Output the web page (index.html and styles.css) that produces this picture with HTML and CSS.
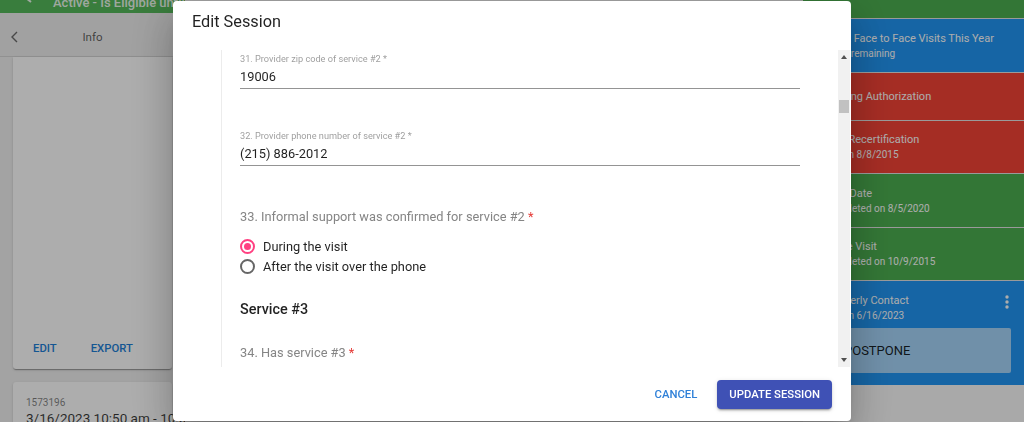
FILE: index.html
```html
<!DOCTYPE html>
<html lang="en">
<head>
<meta charset="utf-8">
<title>Edit Session</title>
<link rel="stylesheet" href="styles.css">
</head>
<body>
<div class="app">
  <aside class="left">
    <div class="status-bar">
      <svg class="status-icon" width="14" height="13" viewBox="0 0 14 13"><path d="M13 -2H3M7 -6L2 -2L7 2" fill="none" stroke="currentColor" stroke-width="2"/></svg>
      <span class="status-text">Active - Is Eligible until 12/31/2023</span>
    </div>
    <div class="info-header">
      <svg class="chevron" width="8" height="12" viewBox="0 0 8 12"><polyline points="7,1 2,6 7,11" fill="none" stroke="currentColor" stroke-width="1.4"/></svg>
      <span class="info-title">Info</span>
      <span></span>
    </div>
    <div class="left-body">
      <div class="card card-main">
        <div class="card-actions">
          <button class="text-btn">EDIT</button>
          <button class="text-btn">EXPORT</button>
        </div>
      </div>
      <div class="card card-session">
        <div class="session-id">1573196</div>
        <div class="session-time">3/16/2023 10:50 am - 10:55 am</div>
      </div>
    </div>
  </aside>
  <main class="middle"></main>
  <aside class="right">
    <div class="tile tile-green tile-top"></div>
    <div class="tile tile-blue h54">
      <div class="tile-title">2 of 2 Face to Face Visits This Year</div>
      <div class="tile-sub">0 of 2 remaining</div>
    </div>
    <div class="tile tile-red h48">
      <div class="tile-title">Pending Authorization</div>
    </div>
    <div class="tile tile-red h53">
      <div class="tile-title">Next Recertification</div>
      <div class="tile-sub">Due on 8/8/2015</div>
    </div>
    <div class="tile tile-green h54">
      <div class="tile-title">Start Date</div>
      <div class="tile-sub">Completed on 8/5/2020</div>
    </div>
    <div class="tile tile-green h53">
      <div class="tile-title">Home Visit</div>
      <div class="tile-sub">Completed on 10/9/2015</div>
    </div>
    <div class="tile tile-blue tile-action">
      <div class="tile-head">
        <div>
          <div class="tile-title">Quarterly Contact</div>
          <div class="tile-sub">Due on 6/16/2023</div>
        </div>
        <svg class="kebab" width="4" height="14" viewBox="0 0 4 14"><circle cx="2" cy="2" r="1.7"/><circle cx="2" cy="7" r="1.7"/><circle cx="2" cy="12" r="1.7"/></svg>
      </div>
      <button class="postpone">POSTPONE</button>
    </div>
  </aside>
</div>

<div class="overlay">
  <div class="dialog" role="dialog">
    <h2 class="dialog-title">Edit Session</h2>
    <div class="dialog-content">
      <div class="form">
        <div class="field">
          <label class="field-label">31. Provider zip code of service #2 *</label>
          <div class="field-value">19006</div>
        </div>
        <div class="field">
          <label class="field-label">32. Provider phone number of service #2 *</label>
          <div class="field-value">(215) 886-2012</div>
        </div>
        <div class="question">33. Informal support was confirmed for service #2 <span class="req">*</span></div>
        <div class="radio-group">
          <div class="radio-row"><span class="radio checked"></span><span>During the visit</span></div>
          <div class="radio-row"><span class="radio"></span><span>After the visit over the phone</span></div>
        </div>
        <h3 class="section-title">Service #3</h3>
        <div class="question">34. Has service #3 <span class="req">*</span></div>
      </div>
      <div class="scrollbar">
        <span class="arrow arrow-up"></span>
        <span class="thumb"></span>
        <span class="arrow arrow-down"></span>
      </div>
    </div>
    <div class="dialog-actions">
      <button class="btn-cancel">CANCEL</button>
      <button class="btn-primary">UPDATE SESSION</button>
    </div>
  </div>
</div>
</body>
</html>
```
FILE: styles.css
```css
* { box-sizing: border-box; }
html, body { margin: 0; height: 100%; }
body {
  font-family: Roboto, "Noto Sans", "Liberation Sans", sans-serif;
  background: #f0f0f0;
  overflow: hidden;
}
button { font-family: inherit; cursor: pointer; }

.app { display: flex; height: 422px; }

/* left column */
.left { width: 185px; flex: none; display: flex; flex-direction: column; background: #f0f0f0; }
.status-bar {
  height: 13px; flex: none; background: #55b85a; overflow: hidden;
  display: flex; align-items: flex-end; padding-left: 24px; gap: 15px;
  color: rgba(255,255,255,.9);
}
.status-icon { flex: none; align-self: flex-start; }
.status-text { font-size: 13px; font-weight: 500; line-height: 20px; white-space: nowrap; }
.info-header {
  height: 44px; flex: none; background: #ededed; border-bottom: 1px solid #d6d6d6;
  display: grid; grid-template-columns: 1fr auto 1fr; align-items: center;
  padding-top: 4px; color: rgba(0,0,0,.62);
}
.chevron { color: rgba(0,0,0,.55); margin-left: 10px; }
.info-title { font-size: 11.5px; }
.left-body { flex: 1; display: flex; flex-direction: column; padding: 0 13px; }
.card {
  background: #fff;
  box-shadow: 0 2px 1px -1px rgba(0,0,0,.2), 0 1px 1px 0 rgba(0,0,0,.14), 0 1px 3px 0 rgba(0,0,0,.12);
  border-radius: 0 0 3px 3px;
}
.card-main { height: 312px; flex: none; display: flex; flex-direction: column; justify-content: flex-end; padding: 0 8px 3px; }
.card-actions { display: flex; gap: 10px; }
.text-btn {
  height: 36px; padding: 0 12px; border: 0; background: none;
  font-size: 11.3px; font-weight: 500; color: #1e7fd8;
}
.card-session { margin-top: 13px; flex: 1; padding: 14px 13px 0; border-radius: 3px; }
.session-id { font-size: 10px; line-height: 13px; color: rgba(0,0,0,.5); }
.session-time { font-size: 13.5px; line-height: 18px; color: rgba(0,0,0,.78); white-space: nowrap; }

.middle { flex: 1; background: #f0f0f0; }

/* right column */
.right { width: 221px; flex: none; display: flex; flex-direction: column; background: #fafafa; }
.tile {
  flex: none; display: flex; flex-direction: column; justify-content: center;
  padding-left: 20px; color: #fff; border-top: 1px solid #e4e4e4;
}
.tile-top { height: 18px; border-top: 0; }
.h48 { height: 48px; }
.h53 { height: 53px; }
.h54 { height: 54px; }
.tile-green { background: #4caf50; }
.tile-blue { background: #2196f3; }
.tile-red { background: #f44336; }
.tile-title { font-size: 11px; line-height: 15px; white-space: nowrap; }
.tile-sub { font-size: 10px; line-height: 15px; white-space: nowrap; }
.tile-action { height: 105px; justify-content: flex-start; padding: 12px 13px 12px 20px; }
.tile-head { display: flex; justify-content: space-between; align-items: flex-start; }
.kebab { fill: #fff; margin: 2px 2px 0 0; }
.postpone {
  margin-top: 5px; height: 45px; border: 0; border-radius: 2px;
  background: rgba(255,255,255,.6); color: rgba(0,0,0,.87);
  font-size: 13px; text-align: left; padding-left: 21px;
}

/* dialog */
.overlay {
  position: fixed; inset: 0; background: rgba(0,0,0,.32);
  display: flex; align-items: center; justify-content: center;
}
.dialog {
  width: 678px; height: 420px; background: #fff; border-radius: 4px;
  display: flex; flex-direction: column;
  box-shadow: 0 11px 15px -7px rgba(0,0,0,.2), 0 24px 38px 3px rgba(0,0,0,.14), 0 9px 46px 8px rgba(0,0,0,.12);
}
.dialog-title {
  margin: 0; padding: 9px 19px 16px; font-size: 16.3px; line-height: 24px;
  font-weight: 400; color: rgba(0,0,0,.87);
}
.dialog-content {
  position: relative; height: 317px; flex: none; overflow: hidden;
  padding: 0 51px 0 48px;
}
.form { height: 100%; border-left: 1px solid #ececec; padding: 3px 0 0 18px; }
.field { margin-bottom: 41px; border-bottom: 1px solid #949494; }
.field-label { display: block; font-size: 9.2px; line-height: 12px; color: rgba(0,0,0,.4); margin-bottom: 2px; }
.field-value { font-size: 12.8px; line-height: 20px; padding-bottom: 1px; color: rgba(0,0,0,.87); }
.question { font-size: 12.8px; line-height: 20px; color: #858585; margin-top: 39px; }
.field + .question { margin-top: 0; }
.req { color: #e53935; }
.radio-group { margin-top: 9px; }
.radio-row { display: flex; align-items: center; gap: 8px; height: 20px; font-size: 12.8px; color: rgba(0,0,0,.87); }
.radio {
  width: 15px; height: 15px; border-radius: 50%; border: 2px solid rgba(0,0,0,.6);
  display: flex; align-items: center; justify-content: center; flex: none;
}
.radio.checked { border-color: #ff4081; }
.radio.checked::after { content: ""; width: 7px; height: 7px; border-radius: 50%; background: #ff4081; }
.section-title { margin: 22px 0 0; font-size: 14.4px; line-height: 24px; font-weight: 500; color: rgba(0,0,0,.87); }
.section-title + .question { margin-top: 21px; }

.scrollbar {
  position: absolute; top: 0; right: 1px; bottom: 0; width: 12px; background: #f1f1f1;
  display: flex; flex-direction: column; align-items: center;
}
.arrow { width: 0; height: 0; border-left: 3.5px solid transparent; border-right: 3.5px solid transparent; }
.arrow-up { border-bottom: 4px solid #505050; margin-top: 5px; }
.arrow-down { border-top: 4px solid #505050; margin-top: auto; margin-bottom: 5px; }
.thumb { position: absolute; top: 50px; left: 1px; width: 10px; height: 13px; background: #c1c1c1; }

.dialog-actions {
  flex: 1; display: flex; justify-content: flex-end; align-items: flex-start;
  padding: 13px 19px 0 0; gap: 12px;
}
.btn-cancel {
  height: 29px; padding: 0 8px; border: 0; background: none;
  font-size: 11.3px; font-weight: 500; color: #2f80d8;
}
.btn-primary {
  height: 29px; padding: 0 12px; border: 0; border-radius: 4px; background: #3f51b5; color: #fff;
  font-size: 11.3px; font-weight: 500;
  box-shadow: 0 3px 1px -2px rgba(0,0,0,.2), 0 2px 2px 0 rgba(0,0,0,.14), 0 1px 5px 0 rgba(0,0,0,.12);
}
```
